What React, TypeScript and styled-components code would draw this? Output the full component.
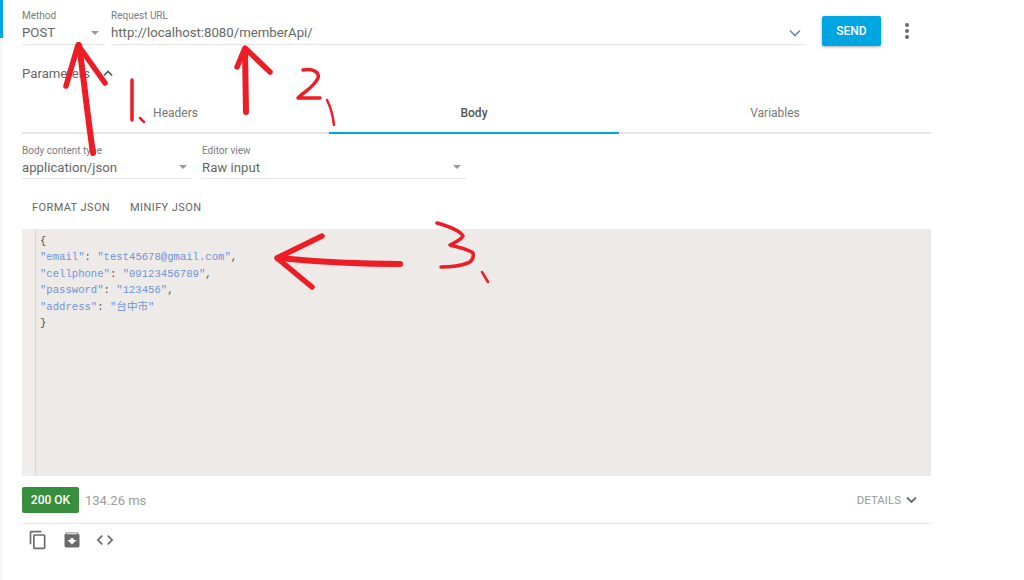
import React from 'react';
import styled, { createGlobalStyle } from 'styled-components';

const GlobalStyle = createGlobalStyle`
  html, body {
    margin: 0;
    padding: 0;
    background: #fff;
    overflow: hidden;
  }
  body {
    font-family: Roboto, "Noto Sans", sans-serif;
    color: #000;
  }
`;

const Page = styled.div`
  position: relative;
  width: 1024px;
  height: 580px;
  overflow: hidden;
  display: flex;
`;

const SideStrip = styled.div`
  width: 3px;
  flex: none;
  display: flex;
  flex-direction: column;
  background: #f8f8f8;
`;

const SideMarker = styled.div`
  height: 38px;
  background: #00a6e2;
`;

const Content = styled.div`
  width: 909px;
  margin-left: 19px;
  flex: none;
  display: flex;
  flex-direction: column;
`;

const RequestRow = styled.div`
  display: flex;
  align-items: flex-start;
  height: 44px;
  padding-top: 9px;
`;

const Field = styled.div<{ $width: number; $gap?: number }>`
  width: ${p => p.$width}px;
  margin-right: ${p => p.$gap ?? 0}px;
  flex: none;
  height: 35px;
  border-bottom: 1px solid #e4e4e4;
  position: relative;
`;

const FieldLabel = styled.div`
  font-size: 10px;
  line-height: 14px;
  color: #7c7c7c;
`;

const FieldValue = styled.div`
  margin-top: -1px;
  font-size: 13.2px;
  line-height: 21px;
  color: #666;
`;

const CaretDown = styled.span`
  position: absolute;
  right: 5px;
  bottom: 9px;
  width: 0;
  height: 0;
  border-left: 4px solid transparent;
  border-right: 4px solid transparent;
  border-top: 4px solid #9a9a9a;
`;

const UrlChevron = styled.svg`
  position: absolute;
  right: 4px;
  bottom: 7px;
  width: 12px;
  height: 8px;
`;

const SendButton = styled.button`
  width: 59px;
  height: 30px;
  flex: none;
  margin: 7px 0 0 17px;
  border: 0;
  border-radius: 2px;
  background: #00a6e2;
  color: #fff;
  font: 500 12px Roboto, sans-serif;
  box-shadow: 0 1px 3px rgba(0, 0, 0, 0.35);
  padding: 0;
`;

const MoreButton = styled.div`
  margin: 14px 0 0 24px;
  width: 4px;
  display: flex;
  flex-direction: column;
  gap: 2px;
`;

const MoreDot = styled.span`
  width: 4px;
  height: 4px;
  border-radius: 50%;
  background: #6a6a6a;
`;

const ParamsToggle = styled.div`
  margin-top: 10px;
  height: 20px;
  display: flex;
  align-items: center;
  gap: 13px;
  font-size: 13.2px;
  color: #666;
`;

const Tabs = styled.div`
  margin-top: 15px;
  display: grid;
  grid-template-columns: 307px 290px 312px;
  border-bottom: 2px solid #e6e6e6;
  height: 34px;
`;

const Tab = styled.div<{ $active?: boolean }>`
  margin-bottom: -2px;
  display: flex;
  align-items: center;
  justify-content: center;
  padding-bottom: 5px;
  font-size: 12px;
  font-weight: ${p => (p.$active ? 500 : 400)};
  color: ${p => (p.$active ? '#555' : '#777')};
  border-bottom: 2px solid ${p => (p.$active ? '#00a6e2' : 'transparent')};
`;

const BodyOptions = styled.div`
  display: flex;
  margin-top: 10px;
`;

const BodyField = styled(Field)`
  height: 34px;
`;

const ActionRow = styled.div`
  display: flex;
  margin-top: 18px;
  height: 20px;
  padding-left: 10px;
  gap: 20px;
  align-items: center;
`;

const TextAction = styled.div`
  font-size: 11px;
  letter-spacing: 0.4px;
  color: #666;
`;

const Editor = styled.div`
  margin-top: 12px;
  height: 247px;
  background: #eeeae8;
  display: flex;
`;

const Gutter = styled.div`
  width: 13px;
  flex: none;
  background: #f0edeb;
  border-right: 1px solid #d8d6d4;
`;

const Code = styled.pre`
  margin: 0;
  padding: 3.5px 0 0 4px;
  font-family: "Liberation Mono", "Noto Sans CJK TC", monospace;
  font-size: 10.6px;
  line-height: 16.6px;
  color: #4c4c4c;
`;

const Token = styled.span`
  color: #6f94d8;
`;

const StatusRow = styled.div`
  margin-top: 11px;
  height: 26px;
  display: flex;
  align-items: center;
`;

const StatusBadge = styled.div`
  width: 57px;
  height: 26px;
  border-radius: 2px;
  background: #388e3c;
  color: #fff;
  font-size: 12px;
  font-weight: 500;
  display: flex;
  align-items: center;
  justify-content: center;
`;

const Timing = styled.div`
  margin-left: 6px;
  font-size: 13px;
  color: #9a9a9a;
`;

const Details = styled.div`
  margin-left: auto;
  margin-right: 14px;
  display: flex;
  align-items: center;
  gap: 5px;
  font-size: 11.5px;
  color: #9a9a9a;
`;

const Divider = styled.div`
  margin-top: 10px;
  height: 1px;
  background: #e4e4e4;
`;

const IconRow = styled.div`
  display: flex;
  align-items: center;
  gap: 13.5px;
  padding: 6px 0 0 6px;
`;

const Annotations = styled.svg`
  position: absolute;
  left: 0;
  top: 0;
  width: 1024px;
  height: 580px;
  pointer-events: none;
`;

const Scribble = styled.path<{ $w?: number }>`
  fill: none;
  stroke: #ee1c25;
  stroke-width: ${p => p.$w ?? 4};
  stroke-linecap: round;
  stroke-linejoin: round;
`;

export default function App() {
  return (
    <Page>
      <GlobalStyle />
      <SideStrip>
        <SideMarker />
      </SideStrip>
      <Content>
        <RequestRow>
          <Field $width={82} $gap={7}>
            <FieldLabel>Method</FieldLabel>
            <FieldValue>POST</FieldValue>
            <CaretDown />
          </Field>
          <Field $width={694}>
            <FieldLabel>Request URL</FieldLabel>
            <FieldValue>http://localhost:8080/memberApi/</FieldValue>
            <UrlChevron viewBox="0 0 12 8">
              <path d="M1 1.5 6 6.5 11 1.5" fill="none" stroke="#6f8a9c" strokeWidth="1.6" />
            </UrlChevron>
          </Field>
          <SendButton>SEND</SendButton>
          <MoreButton>
            <MoreDot />
            <MoreDot />
            <MoreDot />
          </MoreButton>
        </RequestRow>

        <ParamsToggle>
          Parameters
          <svg width="10" height="7" viewBox="0 0 12 8">
            <path d="M1 6.5 6 1.5 11 6.5" fill="none" stroke="#555" strokeWidth="1.8" />
          </svg>
        </ParamsToggle>

        <Tabs>
          <Tab>Headers</Tab>
          <Tab $active>Body</Tab>
          <Tab>Variables</Tab>
        </Tabs>

        <BodyOptions>
          <BodyField $width={170} $gap={10}>
            <FieldLabel>Body content type</FieldLabel>
            <FieldValue>application/json</FieldValue>
            <CaretDown />
          </BodyField>
          <BodyField $width={264}>
            <FieldLabel>Editor view</FieldLabel>
            <FieldValue>Raw input</FieldValue>
            <CaretDown />
          </BodyField>
        </BodyOptions>

        <ActionRow>
          <TextAction>FORMAT JSON</TextAction>
          <TextAction>MINIFY JSON</TextAction>
        </ActionRow>

        <Editor>
          <Gutter />
          <Code>
            {'{\n'}
            <Token>"email"</Token>: <Token>"test45678@gmail.com"</Token>,{'\n'}
            <Token>"cellphone"</Token>: <Token>"09123456789"</Token>,{'\n'}
            <Token>"password"</Token>: <Token>"123456"</Token>,{'\n'}
            <Token>"address"</Token>: <Token>"台中市"</Token>{'\n'}
            {'}'}
          </Code>
        </Editor>

        <StatusRow>
          <StatusBadge>200 OK</StatusBadge>
          <Timing>134.26 ms</Timing>
          <Details>
            DETAILS
            <svg width="11" height="8" viewBox="0 0 11 8">
              <path d="M1 1.5 5.5 6 10 1.5" fill="none" stroke="#6a6a6a" strokeWidth="1.8" />
            </svg>
          </Details>
        </StatusRow>
        <Divider />

        <IconRow>
          <svg width="20" height="20" viewBox="0 0 24 24" fill="#6a6a6a">
            <path d="M16 1H4c-1.1 0-2 .9-2 2v14h2V3h12V1zm3 4H8c-1.1 0-2 .9-2 2v14c0 1.1.9 2 2 2h11c1.1 0 2-.9 2-2V7c0-1.1-.9-2-2-2zm0 16H8V7h11v14z" />
          </svg>
          <svg width="20" height="20" viewBox="0 0 24 24" fill="#6a6a6a">
            <path d="M20.54 5.23 19.15 3.55C18.88 3.21 18.47 3 18 3H6c-.47 0-.88.21-1.16.55L3.46 5.23C3.17 5.57 3 6.02 3 6.5V19c0 1.1.9 2 2 2h14c1.1 0 2-.9 2-2V6.5c0-.48-.17-.93-.46-1.27zM12 17.5 6.5 12H10v-2h4v2h3.5L12 17.5zM5.12 5l.81-1h12l.94 1H5.12z" />
          </svg>
          <svg width="20" height="20" viewBox="0 0 24 24" fill="#6a6a6a">
            <path d="M9.4 16.6 4.8 12l4.6-4.6L8 6l-6 6 6 6 1.4-1.4zm5.2 0 4.6-4.6-4.6-4.6L16 6l6 6-6 6-1.4-1.4z" />
          </svg>
        </IconRow>
      </Content>

      <Annotations viewBox="0 0 1024 580">
        <Scribble d="M93 153 C88 120 84 80 79 45" $w={6} />
        <Scribble d="M66 86 L78 45 L105 83" $w={5.5} />
        <Scribble d="M246 112 L245 50" $w={6} />
        <Scribble d="M237 67 L245 48 L270 72" $w={5.5} />
        <Scribble d="M132 80 L132 120" $w={3.5} />
        <Scribble d="M140 118 L144 122" $w={2.5} />
        <Scribble d="M303 70 C312 68 320 72 318 78 C315 86 304 92 298 98 L320 98" $w={3.5} />
        <Scribble d="M327 100 C331 108 333 116 334 125" $w={2.5} />
        <Scribble d="M400 264 C360 264 320 262 278 258" $w={6} />
        <Scribble d="M322 236 L277 258 L312 287" $w={5.5} />
        <Scribble d="M437 223 C448 226 460 231 463 236 C461 240 454 243 450 245 C458 247 470 250 473 253 C474 258 472 261 468 263 C460 266 450 267 441 267" $w={3.5} />
        <Scribble d="M482 272 L488 282" $w={2.5} />
      </Annotations>
    </Page>
  );
}
